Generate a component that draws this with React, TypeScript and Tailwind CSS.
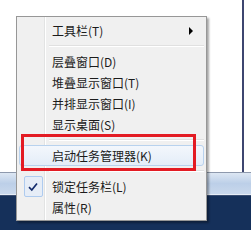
const items = [
  { label: '工具栏(T)', arrow: true },
  'sep',
  { label: '层叠窗口(D)' },
  { label: '堆叠显示窗口(T)' },
  { label: '并排显示窗口(I)' },
  { label: '显示桌面(S)' },
  'sep',
  { label: '启动任务管理器(K)', hover: true },
  'sep',
  { label: '锁定任务栏(L)', checked: true },
  { label: '属性(R)' },
] as const

function Check() {
  return (
    <svg width="10" height="10" viewBox="0 0 10 10" className="block">
      <path d="M1 5.2 L3.8 8 L9 1.5" fill="none" stroke="#142c6c" strokeWidth="1.7" />
    </svg>
  )
}

export default function App() {
  return (
    <div className="relative w-[251px] h-[230px] overflow-hidden bg-white flex flex-col font-['Noto_Sans_CJK_SC','Microsoft_YaHei',sans-serif]">
      {/* window behind */}
      <div className="h-[172px] flex justify-end">
        <div className="w-[2px] bg-[#3d4670] mr-[7px]" />
      </div>

      {/* taskbar */}
      <div className="flex-1 flex flex-col">
        <div className="h-px bg-[#8e99ad]" />
        <div className="h-[21px] bg-gradient-to-b from-[#dde7f3] via-[#bccfe8] to-[#c9d8ec]" />
        <div className="h-px bg-[#e6edf6]" />
        <div className="h-px bg-[#3a4e72]" />
        <div className="flex-1 bg-[#15305a]" />
      </div>

      {/* context menu */}
      <div className="absolute left-[16px] top-[16px] w-[191px] border border-[#979797] bg-[#f0f0f0] shadow-[2px_2px_2px_rgba(0,0,0,0.35)] px-[2px] pt-[3px] pb-[2px] bg-[linear-gradient(to_right,#f0f0f0_27px,#e2e3e3_27px,#e2e3e3_28px,#ffffff_28px,#ffffff_29px,#f0f0f0_29px)]">
        {items.map((it, i) =>
          it === 'sep' ? (
            <div key={i} className="py-[4px] pl-[30px]">
              <div className="h-px bg-[#e0e0e0]" />
              <div className="h-px bg-white" />
            </div>
          ) : (
            <div
              key={i}
              className={`h-[21px] flex items-center text-[12px] text-[#1b1b1b] leading-none rounded-[3px] border ${
                'hover' in it && it.hover
                  ? 'border-[#b8d2ee] bg-gradient-to-b from-[#f3f7fc] to-[#e4edf8]'
                  : 'border-transparent'
              }`}
            >
              <div className="w-[26px] h-full flex items-center justify-center">
                {'checked' in it && it.checked && (
                  <div className="w-[19px] h-[21px] flex items-center justify-center rounded-[2px] border border-[#aecbef] bg-[#e6edf7]">
                    <Check />
                  </div>
                )}
              </div>
              <span className="ml-[6px] flex-1">{it.label}</span>
              {'arrow' in it && it.arrow && (
                <span className="mr-[10px] w-0 h-0 border-y-[4px] border-y-transparent border-l-[4px] border-l-[#000]" />
              )}
            </div>
          )
        )}
      </div>

      {/* red annotation box */}
      <div className="absolute left-[21px] top-[134px] w-[175px] h-[37px] border-[3px] border-[#e31b23]" />
    </div>
  )
}
